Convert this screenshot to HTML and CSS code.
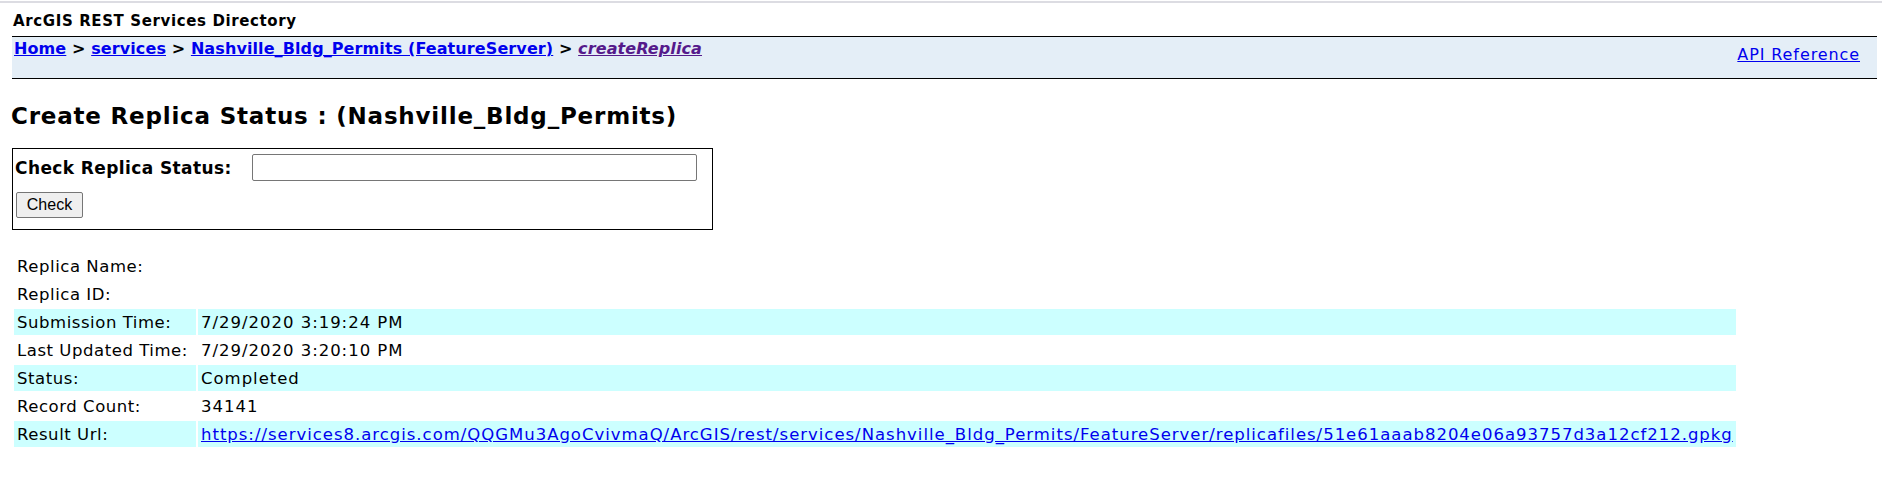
FILE: index.html
```html
<!DOCTYPE html>
<html>
<head>
<meta charset="utf-8">
<title>ArcGIS REST Services Directory</title>
<link rel="stylesheet" href="styles.css">
</head>
<body>
<div class="topline"></div>
<div class="titlecell">ArcGIS REST Services Directory</div>
<div class="navbar">
  <div class="breadcrumbs">
    <a href="#">Home</a> &gt; <a href="#">services</a> &gt; <a href="#">Nashville_Bldg_Permits (FeatureServer)</a> &gt; <a href="#" class="current">createReplica</a>
  </div>
  <a href="#" class="apiref">API Reference</a>
</div>

<h2 class="pagetitle">Create Replica Status : (Nashville_Bldg_Permits)</h2>

<form class="checkform">
  <div class="formrow">
    <label class="formlabel" for="statusUrl">Check Replica Status:</label>
    <input type="text" id="statusUrl" class="statusinput">
  </div>
  <button type="button" class="checkbtn">Check</button>
</form>

<table class="infotable">
  <tr><td class="lbl">Replica Name:</td><td></td></tr>
  <tr><td class="lbl">Replica ID:</td><td></td></tr>
  <tr class="hl"><td class="lbl">Submission Time:</td><td>7/29/2020 3:19:24 PM</td></tr>
  <tr><td class="lbl">Last Updated Time:</td><td>7/29/2020 3:20:10 PM</td></tr>
  <tr class="hl"><td class="lbl">Status:</td><td>Completed</td></tr>
  <tr><td class="lbl">Record Count:</td><td>34141</td></tr>
  <tr class="hl"><td class="lbl">Result Url:</td><td><a href="#">https://services8.arcgis.com/QQGMu3AgoCvivmaQ/ArcGIS/rest/services/Nashville_Bldg_Permits/FeatureServer/replicafiles/51e61aaab8204e06a93757d3a12cf212.gpkg</a></td></tr>
</table>
</body>
</html>
```

FILE: styles.css
```css
html, body {
  margin: 0;
  padding: 0;
  background: #fff;
  color: #000;
  font-family: "DejaVu Sans", Verdana, sans-serif;
}

a { color: #0000ee; }

.topline {
  margin-top: 1px;
  height: 2px;
  background: #dcdce2;
}

.titlecell {
  font-weight: bold;
  font-size: 15px;
  letter-spacing: 0.62px;
  line-height: 18px;
  padding: 9px 0 6px 13px;
}

.navbar {
  display: flex;
  justify-content: space-between;
  align-items: flex-start;
  margin: 0 5px 0 12px;
  height: 41px;
  background: #e4eef7;
  border-top: 1px solid #000;
  border-bottom: 1px solid #000;
}

.breadcrumbs {
  font-weight: bold;
  font-size: 16px;
  letter-spacing: 0.1px;
  line-height: 18px;
  padding: 3px 0 0 2px;
}

.breadcrumbs .current {
  color: #551a8b;
  font-style: italic;
}

.apiref {
  font-size: 16px;
  letter-spacing: 0.9px;
  line-height: 18px;
  margin: 9px 17px 0 0;
}

.pagetitle {
  font-weight: bold;
  font-size: 23px;
  letter-spacing: 0.8px;
  line-height: 26px;
  margin: 24px 0 0 11px;
}

.checkform {
  box-sizing: border-box;
  width: 701px;
  height: 82px;
  margin: 19px 0 0 12px;
  border: 1px solid #000;
  padding: 5px 0 0 2px;
}

.formrow {
  display: flex;
  align-items: center;
}

.formlabel {
  font-weight: bold;
  font-size: 17px;
  letter-spacing: 0.4px;
  width: 237px;
}

.statusinput {
  box-sizing: border-box;
  width: 445px;
  height: 27px;
  border: 1px solid #767676;
  border-radius: 2px;
  padding: 1px 2px;
  margin: 0;
}

.checkbtn {
  box-sizing: border-box;
  height: 26px;
  width: 67px;
  margin: 11px 0 0 1px;
  padding: 0;
  font-family: "Liberation Sans", Arial, sans-serif;
  font-size: 16px;
  color: #000;
  background: #efefef;
  border: 1px solid #767676;
  border-radius: 2px;
}

.infotable {
  margin: 21px 0 0 12px;
  border-collapse: separate;
  border-spacing: 2px;
  font-size: 16.5px;
  letter-spacing: 0.98px;
}

.infotable td {
  height: 26px;
  padding: 0 3px;
  white-space: nowrap;
  vertical-align: middle;
}

.infotable td.lbl {
  width: 176px;
  letter-spacing: 0.55px;
}

.infotable tr.hl td {
  background: #ccffff;
}
```
